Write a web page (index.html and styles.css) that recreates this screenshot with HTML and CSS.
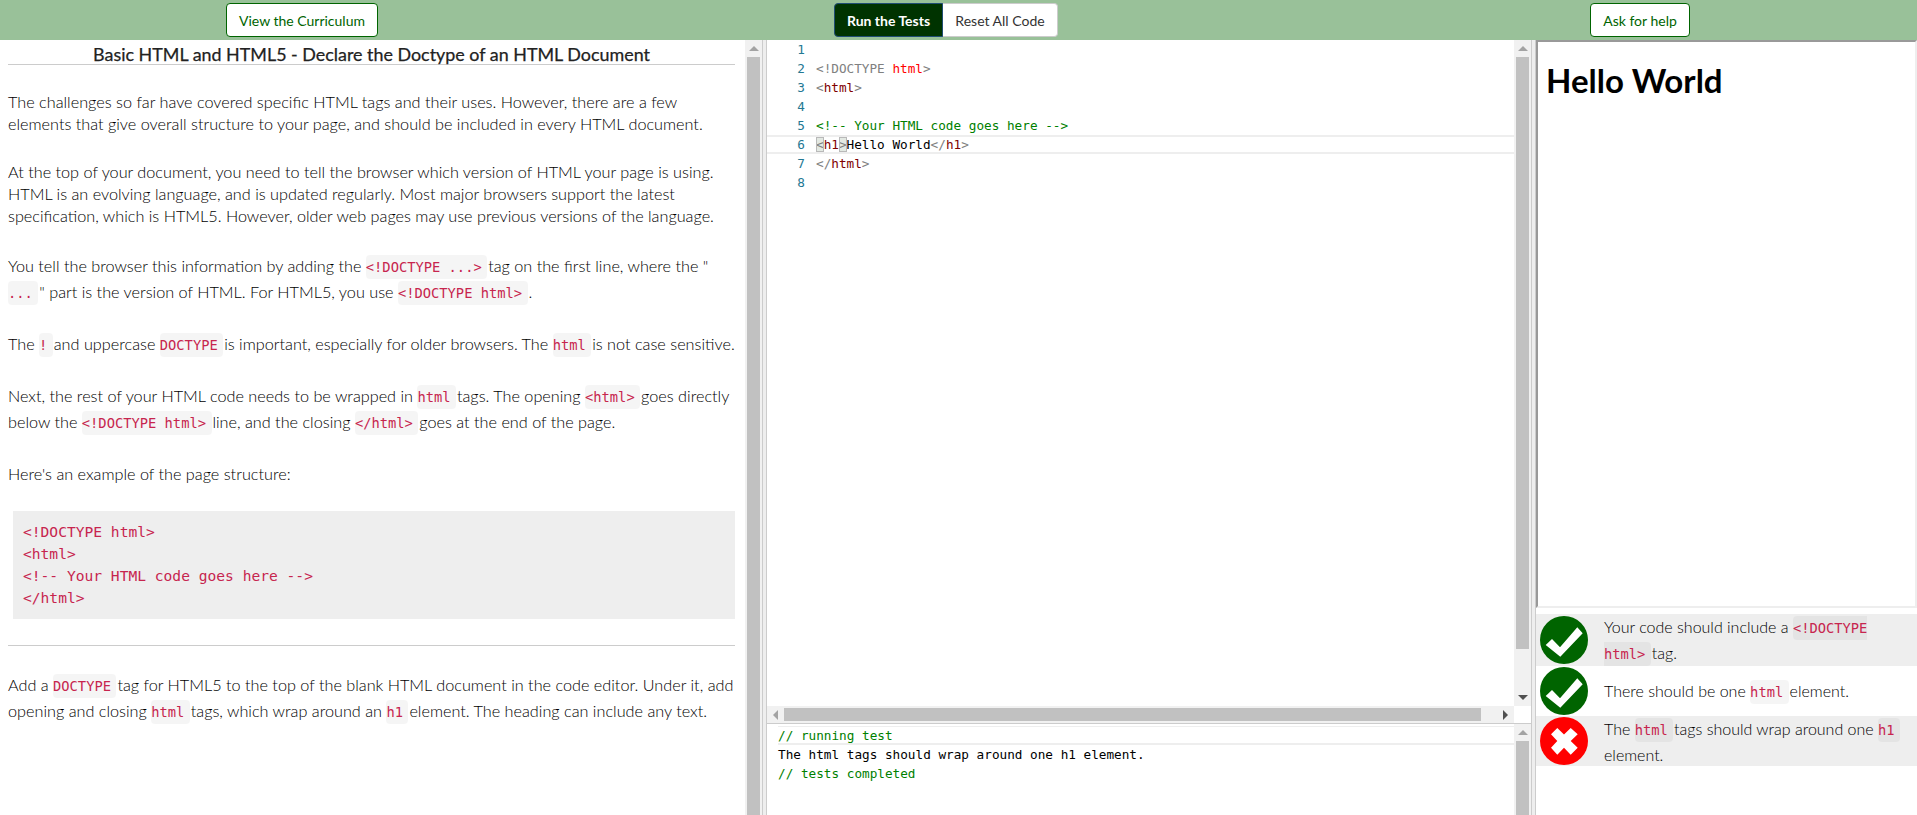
FILE: index.html
```html
<!DOCTYPE html>
<html lang="en">
<head>
<meta charset="utf-8">
<title>Declare the Doctype of an HTML Document</title>
<link rel="stylesheet" href="styles.css">
</head>
<body>
<header class="topbar">
  <button class="btn btn-curriculum">View the Curriculum</button>
  <div class="btn-group">
    <button class="btn-run">Run the Tests</button>
    <button class="btn-reset">Reset All Code</button>
  </div>
  <button class="btn btn-help">Ask for help</button>
</header>
<main class="workspace">
  <section class="lesson">
    <div class="lesson-body">
      <h1 class="lesson-title">Basic HTML and HTML5 - Declare the Doctype of an HTML Document</h1>
      <p class="para">The challenges so far have covered specific HTML tags and their uses. However, there are a few elements that give overall structure to your page, and should be included in every HTML document.</p>
      <p class="para">At the top of your document, you need to tell the browser which version of HTML your page is using. HTML is an evolving language, and is updated regularly. Most major browsers support the latest specification, which is HTML5. However, older web pages may use previous versions of the language.</p>
      <p class="para tall">You tell the browser this information by adding the <code>&lt;!DOCTYPE ...&gt;</code> tag on the first line, where the " <code>...</code> " part is the version of HTML. For HTML5, you use <code>&lt;!DOCTYPE html&gt;</code> .</p>
      <p class="para tall">The <code>!</code> and uppercase <code>DOCTYPE</code> is important, especially for older browsers. The <code>html</code> is not case sensitive.</p>
      <p class="para tall">Next, the rest of your HTML code needs to be wrapped in <code>html</code> tags. The opening <code>&lt;html&gt;</code> goes directly below the <code>&lt;!DOCTYPE html&gt;</code> line, and the closing <code>&lt;/html&gt;</code> goes at the end of the page.</p>
      <p class="para tall before-sample">Here's an example of the page structure:</p>
      <pre class="sample">&lt;!DOCTYPE html&gt;
&lt;html&gt;
&lt;!-- Your HTML code goes here --&gt;
&lt;/html&gt;</pre>
      <hr class="rule">
      <p class="para tall">Add a <code>DOCTYPE</code> tag for HTML5 to the top of the blank HTML document in the code editor. Under it, add opening and closing <code>html</code> tags, which wrap around an <code>h1</code> element. The heading can include any text.</p>
    </div>
    <div class="vsb">
      <span class="arrow up"></span>
      <span class="thumb grow"></span>
    </div>
  </section>
  <div class="splitter"></div>
  <section class="center">
    <div class="editor">
      <div class="code">
        <div class="line"><span class="num">1</span></div>
        <div class="line"><span class="num">2</span><span class="g">&lt;!DOCTYPE </span><span class="r">html</span><span class="g">&gt;</span></div>
        <div class="line"><span class="num">3</span><span class="g">&lt;</span><span class="t">html</span><span class="g">&gt;</span></div>
        <div class="line"><span class="num">4</span></div>
        <div class="line"><span class="num">5</span><span class="c">&lt;!-- Your HTML code goes here --&gt;</span></div>
        <div class="line active"><span class="num">6</span><span class="g match">&lt;</span><span class="t">h1</span><span class="g match">&gt;</span><span class="k">Hello World</span><span class="g">&lt;/</span><span class="t">h1</span><span class="g">&gt;</span></div>
        <div class="line"><span class="num">7</span><span class="g">&lt;/</span><span class="t">html</span><span class="g">&gt;</span></div>
        <div class="line"><span class="num">8</span></div>
      </div>
      <div class="vsb">
        <span class="arrow up"></span>
        <span class="thumb editor-thumb"></span>
        <span class="spring"></span>
        <span class="arrow down"></span>
      </div>
    </div>
    <div class="hbar-row">
      <div class="hsb">
        <span class="arrow left"></span>
        <span class="hthumb"></span>
        <span class="arrow right"></span>
      </div>
      <div class="corner"></div>
    </div>
    <div class="output">
      <div class="out-text">
        <div class="out-line active"><span class="c">// running test</span></div>
        <div class="out-line"><span class="k">The html tags should wrap around one h1 element.</span></div>
        <div class="out-line"><span class="c">// tests completed</span></div>
      </div>
      <div class="vsb">
        <span class="arrow up"></span>
        <span class="thumb grow out-thumb"></span>
      </div>
    </div>
  </section>
  <div class="splitter"></div>
  <section class="results">
    <div class="preview"><h1 class="hello">Hello World</h1></div>
    <div class="test test-a odd">
      <svg class="icon" viewBox="0 0 48 48"><circle cx="24" cy="24" r="24" fill="#006400"/><polygon fill="#fff" points="5.7,29 12,23 20,31.3 37.3,11.3 42.7,17.3 20.3,40.7"/></svg>
      <div class="test-text">Your code should include a <code>&lt;!DOCTYPE<br>html&gt;</code> tag.</div>
    </div>
    <div class="test">
      <svg class="icon" viewBox="0 0 48 48"><circle cx="24" cy="24" r="24" fill="#006400"/><polygon fill="#fff" points="5.7,29 12,23 20,31.3 37.3,11.3 42.7,17.3 20.3,40.7"/></svg>
      <div class="test-text">There should be one <code>html</code> element.</div>
    </div>
    <div class="test odd">
      <svg class="icon" viewBox="0 0 48 48"><circle cx="24" cy="24" r="24" fill="#f00"/><polygon fill="#fff" points="11,17.3 17.3,11 24,17.6 30.7,11 37.7,17.3 30.7,24 37.7,30.7 30.7,37.7 24,30.7 17.3,37.7 11,30.7 17.3,24"/></svg>
      <div class="test-text top">The <code>html</code> tags should wrap around one <code>h1</code> element.</div>
    </div>
  </section>
</main>
</body>
</html>
```
FILE: styles.css
```css
* { box-sizing: border-box; }
html, body { margin: 0; height: 100%; }
body {
  width: 1917px;
  height: 815px;
  overflow: hidden;
  background: #fff;
  color: #000;
  font-family: Lato, "Open Sans", sans-serif;
  font-size: 16px;
}
button { font-family: inherit; cursor: pointer; }

/* top bar */
.topbar {
  height: 40px;
  background: #99c199;
  display: flex;
  align-items: center;
  padding-left: 226px;
}
.btn {
  height: 34px;
  width: 152px;
  padding: 0;
  background: #fff;
  color: #006400;
  border: 1px solid #006400;
  border-radius: 4px;
  font-size: 14px;
}
.btn-group { display: flex; margin-left: 456px; }
.btn-run, .btn-reset { height: 34px; padding: 0; font-size: 14px; }
.btn-run {
  width: 109px;
  background: #003300;
  color: #fff;
  border: 1px solid #204d74;
  border-radius: 4px 0 0 4px;
  font-weight: 700;
}
.btn-reset {
  width: 115px;
  background: #fff;
  color: #333;
  border: 1px solid #ccc;
  border-left: 0;
  border-radius: 0 4px 4px 0;
}
.btn-help { width: 100px; margin-left: 532px; }

/* panes */
.workspace { display: flex; height: 775px; }
.lesson { width: 762px; display: flex; }
.lesson-body { width: 745px; padding: 0 10px 0 8px; }
.splitter {
  width: 5px;
  background: #eee;
  border-left: 1px solid #ccc;
  border-right: 1px solid #ccc;
}
.center { width: 764px; display: flex; flex-direction: column; }
.results { width: 381px; }

/* lesson text */
.lesson-title {
  margin: 0 0 26px;
  height: 25px;
  color: #222;
  line-height: 28px;
  font-size: 17.9px;
  font-weight: 400;
  text-align: center;
  border-bottom: 1px solid #ccc;
  -webkit-text-stroke: .25px #222;
}
.para {
  margin: 0 -3px 26px 0;
  font-size: 16.24px;
  font-weight: 300;
  line-height: 22px;
}
.para.tall { line-height: 26px; }
.para.before-sample { margin-bottom: 24px; }
code {
  font-family: "DejaVu Sans Mono", "Liberation Mono", monospace;
  font-size: 13.75px;
  line-height: 1;
  padding: 4px 5.5px 4px 0;
  margin-right: -3.5px;
  color: #c7254e;
  background: rgba(0, 0, 0, .04);
  border-radius: 4px;
}
.sample {
  margin: 0 0 0 5px;
  padding: 10px;
  background: #eee;
  color: #c7254e;
  font-family: "DejaVu Sans Mono", "Liberation Mono", monospace;
  font-size: 14.6px;
  line-height: 22px;
}
.rule { border: 0; border-top: 1px solid #ccc; margin: 26px 0; }

/* scrollbars */
.vsb {
  width: 17px;
  flex: none;
  background: #f1f1f1;
  display: flex;
  flex-direction: column;
  align-items: center;
}
.arrow { flex: none; display: block; width: 0; height: 0; border: solid transparent; }
.arrow.up { border-width: 0 5px 5px; border-bottom-color: #a3a3a3; margin: 6px 0; }
.arrow.down { border-width: 5px 5px 0; border-top-color: #505050; margin: 6px 0; }
.arrow.left { border-width: 5px 5px 5px 0; border-right-color: #a3a3a3; margin: 0 6px; }
.arrow.right { border-width: 5px 0 5px 5px; border-left-color: #505050; margin: 0 6px; }
.thumb { width: 13px; background: #c1c1c1; flex: none; }
.grow { flex: 1; }
.editor-thumb { height: 592px; }
.spring { flex: 1; }
.hsb {
  flex: 1;
  height: 17px;
  background: #f1f1f1;
  display: flex;
  align-items: center;
}
.hthumb { flex: 1; height: 13px; background: #c1c1c1; margin-right: 16px; }
.corner { width: 17px; background: #fff; }
.hbar-row { display: flex; height: 17px; flex: none; }

/* editor */
.editor { display: flex; height: 666px; flex: none; }
.code, .out-text {
  flex: 1;
  font-family: "DejaVu Sans Mono", "Liberation Mono", monospace;
  font-size: 12.7px;
  line-height: 19px;
  overflow: hidden;
}
.line, .out-line { white-space: pre; }
.line { height: 19px; padding-left: 49px; position: relative; }
.line.active { border-top: 2px solid #eee; border-bottom: 2px solid #eee; line-height: 15px; }
.num { position: absolute; left: 30px; width: 8px; color: #237893; text-align: right; }
.g { color: #808080; }
.r { color: #f00; }
.t { color: #800000; }
.c { color: #008000; }
.k { color: #000; }
.match { background: #e3e9e3; outline: 1px solid #b9b9b9; outline-offset: -1px; }

/* output */
.output {
  flex: 1;
  display: flex;
  border-top: 1px solid #ccc;
  min-height: 0;
}
.out-text { padding: 2px 0 0 11px; }
.out-line { height: 19px; }
.out-line.active { border-top: 1px solid #eee; border-bottom: 2px solid #eee; line-height: 17px; }

/* results */
.preview {
  height: 568px;
  border: 2px solid #eee;
  border-top-color: #999;
  border-left-color: #999;
  padding: 0 8px;
  margin-bottom: 6px;
}
.hello {
  margin: 20px 0 0;
  color: #000;
  font-size: 33px;
  font-weight: 700;
  line-height: 36px;
}
.test { display: flex; height: 50px; align-items: center; padding-left: 4px; }
.test-a { height: 52px; }
.odd { background: #eee; }
.icon { width: 48px; height: 48px; flex: none; }
.test-text { margin-left: 16px; width: 305px; line-height: 26px; font-size: 16px; font-weight: 300; }
.test-text.top { align-self: flex-start; }
```
